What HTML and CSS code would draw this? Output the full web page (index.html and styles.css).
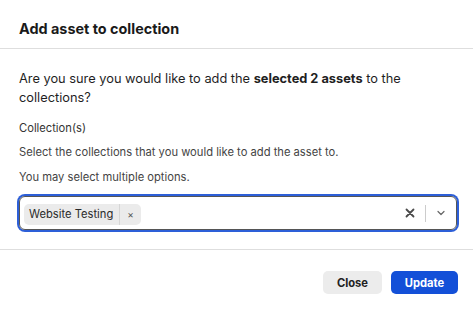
FILE: index.html
```html
<!DOCTYPE html>
<html lang="en">
<head>
    <meta charset="UTF-8">
    <meta name="viewport" content="width=device-width, initial-scale=1.0">
    <title>Add asset to collection</title>
    <link rel="stylesheet" href="styles.css">
</head>
<body>
    <div class="modal">
        <div class="modal-header">
            <h2 class="modal-title">Add asset to collection</h2>
        </div>
        <div class="modal-body">
            <p class="question">Are you sure you would like to add the <b>selected 2 assets</b> to the collections?</p>
            <label class="field-label">Collection(s)</label>
            <p class="help">Select the collections that you would like to add the asset to.</p>
            <p class="help">You may select multiple options.</p>
            <div class="select">
                <div class="select-values">
                    <span class="chip">
                        <span class="chip-label">Website Testing</span>
                        <span class="chip-remove">&times;</span>
                    </span>
                </div>
                <div class="select-actions">
                    <svg class="clear-icon" width="10" height="10" viewBox="0 0 10 10">
                        <path d="M1.5 1.5 L8.5 8.5 M8.5 1.5 L1.5 8.5" stroke="#4a4a4a" stroke-width="1.8" stroke-linecap="round"/>
                    </svg>
                    <span class="sep"></span>
                    <svg class="chevron" width="10" height="10" viewBox="0 0 10 10">
                        <path d="M2 3.5 L5 6.5 L8 3.5" fill="none" stroke="#666" stroke-width="1.2" stroke-linecap="round" stroke-linejoin="round"/>
                    </svg>
                </div>
            </div>
        </div>
        <div class="modal-footer">
            <button class="btn btn-secondary">Close</button>
            <button class="btn btn-primary">Update</button>
        </div>
    </div>
</body>
</html>
```

FILE: styles.css
```css
body {
    margin: 0;
    background-color: #fff;
    font-family: 'Inter', 'Liberation Sans', sans-serif;
    color: #1f1f1f;
}
.modal {
    width: 473px;
}
.modal-header {
    height: 49px;
    padding: 20px 19px 0;
    border-bottom: 1px solid #dedede;
    box-sizing: border-box;
}
.modal-title {
    margin: 0;
    font-size: 14.4px;
    line-height: 18px;
    font-weight: 700;
    color: #1a1a1a;
}
.modal-body {
    padding: 20px 16px 19px 19px;
    border-bottom: 1px solid #dedede;
}
.question {
    margin: 0 0 13px;
    font-size: 12.8px;
    line-height: 19.2px;
    color: #1f1f1f;
}
.question b {
    font-weight: 700;
}
.field-label {
    display: block;
    font-size: 11.2px;
    line-height: 17px;
    color: #333;
    margin-bottom: 7px;
}
.help {
    margin: 0 0 8px;
    font-size: 11.2px;
    line-height: 17px;
    color: #444;
}
.select {
    margin-top: 10px;
    height: 34px;
    border: 1px solid #555;
    border-radius: 6px;
    box-shadow: 0 0 0 2px #2d5fd8;
    display: flex;
    align-items: center;
    justify-content: space-between;
    padding: 0 0 0 4px;
    box-sizing: border-box;
}
.chip {
    display: inline-flex;
    align-items: center;
    height: 21px;
    background-color: #ebebeb;
    border-radius: 5px;
    font-size: 11.2px;
    color: #2a2a2a;
}
.chip-label {
    padding: 0 6px 0 5px;
    border-right: 1px solid #d6d6d6;
    line-height: 21px;
}
.chip-remove {
    padding: 0 7px 0 7px;
    font-size: 10px;
    color: #555;
}
.select-actions {
    display: flex;
    align-items: center;
    gap: 10px;
    padding-right: 10px;
}
.sep {
    width: 1px;
    height: 17px;
    background-color: #ccc;
}
.modal-footer {
    display: flex;
    justify-content: flex-end;
    gap: 9px;
    padding: 21px 15px 0 0;
}
.btn {
    height: 23px;
    border: none;
    border-radius: 5px;
    font-family: 'Inter', 'Liberation Sans', sans-serif;
    font-size: 11.2px;
    font-weight: 700;
    padding: 0 12px;
}
.btn-secondary {
    background-color: #ececec;
    color: #222;
    width: 59px;
}
.btn-primary {
    background-color: #1350d8;
    color: #fff;
    width: 67px;
}
```
